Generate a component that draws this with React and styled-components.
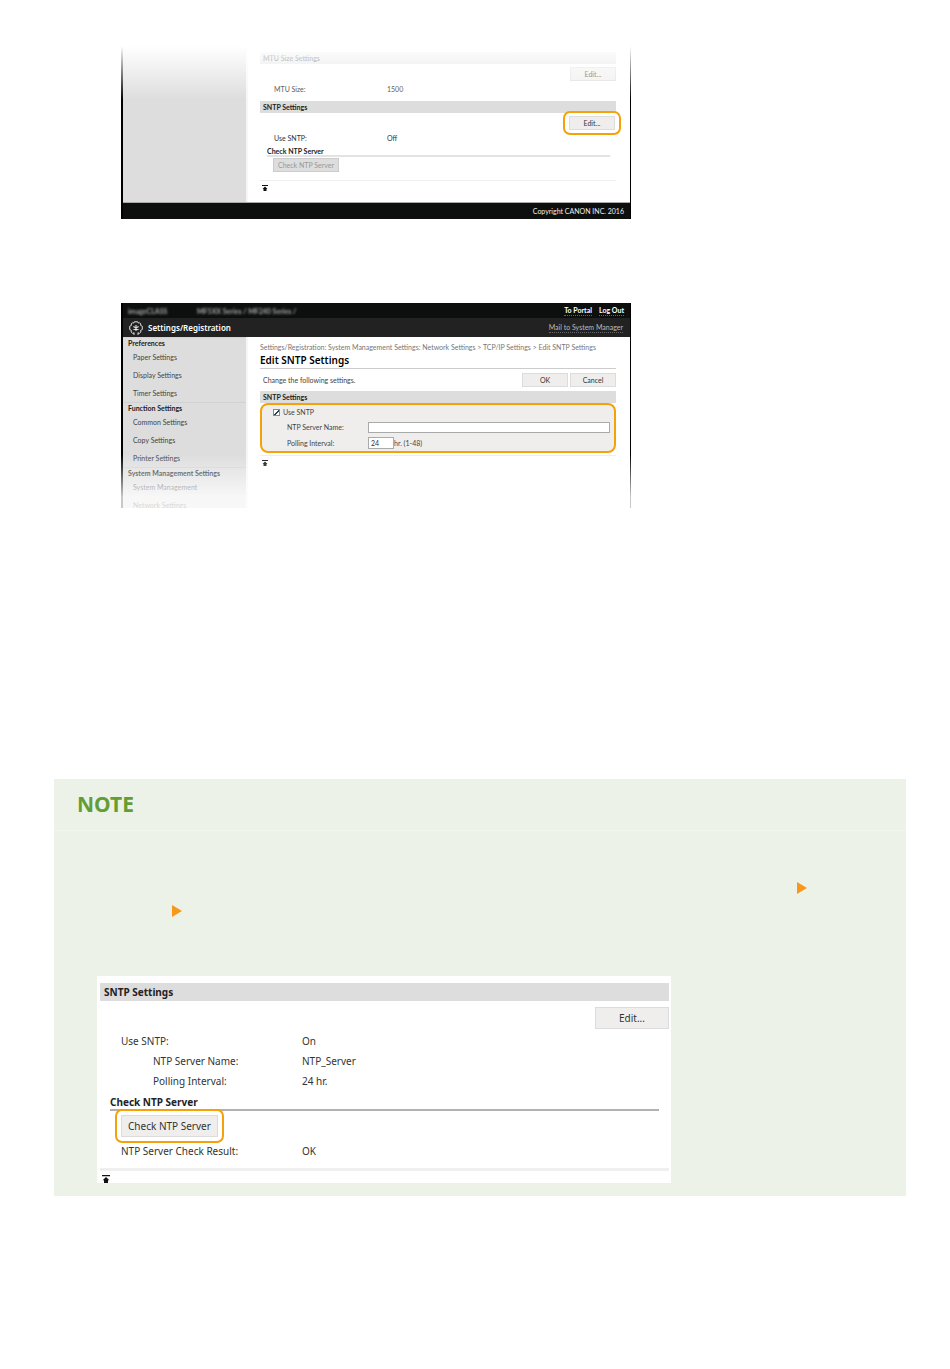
import React from "react";
import styled, { createGlobalStyle, css } from "styled-components";

const GlobalStyle = createGlobalStyle`
	* {
		box-sizing: border-box;
	}

	body {
		margin: 0;
		background: #fff;
		color: #444;
		font-family: "Noto Sans", "Open Sans", sans-serif;
	}

	button,
	input {
		font-family: inherit;
	}
`;

const Page = styled.main`
	display: flex;
	flex-direction: column;
	padding: 46px 44px 173px 54px;
`;

const Screen = styled.section`
	position: relative;
	width: 100%;
	max-width: 510px;
	max-height: 205px;
	margin: 0 0 ${({ $after }) => $after}px 67px;
	padding: 0 1px 0 2px;
	background: #000;
	font-family: Lato, "Noto Sans", sans-serif;
	font-size: 7px;
	line-height: 12px;
	overflow: hidden;
`;

const Fade = styled.div`
	position: absolute;
	left: 0;
	right: 0;
	height: 54px;
	pointer-events: none;
	${({ $edge }) =>
		$edge === "top"
			? css`
					top: 0;
					background: linear-gradient(to bottom, #fff, #ffffff00);
			  `
			: css`
					bottom: 0;
					background: linear-gradient(to top, #ffffffc8 20%, #ffffff00);
			  `}
`;

const Columns = styled.div`
	display: flex;
	background: #fff;
`;

const Side = styled.nav`
	flex: 0 0 125px;
	background: #ddd;
	border-right: 2px solid #f6f6f6;
`;

const SideTitle = styled.h2`
	margin: 0;
	padding-left: 5px;
	font-size: 7px;
	line-height: 10px;
	font-weight: 700;
	color: #222;
	border-top: 1px solid #d2d2d2;
`;

const SideLink = styled.a`
	display: block;
	padding-left: 10px;
	line-height: 18px;
	color: #444;
	text-decoration: none;
`;

const Main = styled.div`
	flex: 1;
	padding: ${({ $top }) => $top}px 14px 0 12px;
`;

const Band = styled.h3`
	margin: 0;
	padding-left: ${({ $large }) => ($large ? 4 : 3)}px;
	background: #ddd;
	color: #222;
	font-weight: 700;
	font-size: ${({ $large }) => ($large ? 10 : 7)}px;
	line-height: ${({ $large }) => ($large ? 18 : 12)}px;
`;

const Actions = styled.div`
	display: flex;
	justify-content: flex-end;
	gap: 2px;
	padding-top: ${({ $top }) => $top}px;
`;

const Button = styled.button`
	min-width: ${({ $large }) => ($large ? 74 : 46)}px;
	height: ${({ $large }) => ($large ? 22 : 14)}px;
	padding: 0 ${({ $large }) => ($large ? 6 : 4)}px;
	border: 1px solid #dcdcdc;
	background: #efeeed;
	color: #333;
	font-size: ${({ $large }) => ($large ? 10 : 7)}px;
	line-height: 12px;

	&:disabled {
		background: #ddd;
		border-color: #ccc;
		color: #999;
	}
`;

const Ring = styled.div`
	width: fit-content;
	margin: ${({ $margin }) => $margin};
	padding: ${({ $pad }) => $pad};
	border: 2px solid #f5a10a;
	border-radius: 7px;
	background: #fff;
	line-height: 0;
`;

const Rows = styled.dl`
	display: grid;
	grid-template-columns: ${({ $label }) => $label}px 1fr;
	margin: 0;
	padding: ${({ $pad }) => $pad};
	line-height: ${({ $line }) => $line}px;
	color: #333;
`;

const Term = styled.dt`
	padding-left: ${({ $indent }) => ($indent ? 32 : 0)}px;
`;

const Value = styled.dd`
	margin: 0;
`;

const SubTitle = styled.h4`
	margin: ${({ $margin }) => $margin};
	color: #222;
	font-weight: 700;
	font-size: ${({ $large }) => ($large ? 10 : 7)}px;
	line-height: ${({ $large }) => ($large ? 14 : 8)}px;
	border-bottom: 2px solid ${({ $large }) => ($large ? "#b1b1b1" : "#e3e3e3")};
`;

const CheckRow = styled.div`
	display: flex;
	padding: 1px 0 8px 13px;
`;

const End = styled.div`
	padding: 4px 2px 11px;
	border-top: ${({ $thick }) => ($thick ? 3 : 1)}px solid #efefef;
	line-height: 0;
`;

const TopLink = styled.a`
	display: inline-block;
	color: #111;
`;

const Footer = styled.footer`
	padding-right: 6px;
	background: #0d0f0e;
	border-top: 1px solid #aaa;
	color: #eee;
	line-height: 16px;
	text-align: right;
`;

const TopBar = styled.header`
	display: flex;
	align-items: center;
	height: 15px;
	padding: 0 6px 0 5px;
	background: #0d0f0e;
	color: #fff;
`;

const Blurred = styled.span`
	width: ${({ $width }) => $width}px;
	color: #aaa;
	font-weight: 700;
	filter: blur(1px);
	white-space: nowrap;
`;

const BarLink = styled.a`
	margin-left: ${({ $push }) => ($push ? "auto" : "7px")};
	color: ${({ $dim }) => ($dim ? "#bbb" : "#fff")};
	font-weight: ${({ $dim }) => ($dim ? 400 : 700)};
	text-decoration: none;
	border-bottom: 1px dotted #666;
	line-height: 9px;
`;

const TitleBar = styled.div`
	display: flex;
	align-items: center;
	gap: 5px;
	height: 19px;
	padding: 0 7px 0 6px;
	background: #222;
	color: #fff;
`;

const AppName = styled.strong`
	font-family: "Noto Sans", sans-serif;
	font-size: 8px;
	font-weight: 600;
`;

const Crumbs = styled.div`
	color: #777;
	white-space: nowrap;
`;

const PageTitle = styled.h1`
	margin: 0 0 4px;
	color: #000;
	font-family: "Noto Sans", sans-serif;
	font-size: 10px;
	line-height: 15px;
	font-weight: 600;
	border-bottom: 1px solid #ccc;
`;

const Intro = styled.div`
	display: flex;
	justify-content: space-between;
	align-items: center;
	margin-bottom: 4px;
	padding-left: 3px;
`;

const Form = styled.form`
	display: grid;
	grid-template-columns: 81px 1fr;
	row-gap: 2px;
	align-items: center;
	margin-bottom: 2px;
	padding: 1px 4px 1px 25px;
	border: 2px solid #f5a10a;
	border-radius: 8px;
	background: #efeeed;
`;

const CheckLabel = styled.label`
	display: flex;
	grid-column: 1 / -1;
	align-items: center;
	gap: 3px;
	margin-left: -14px;
	line-height: 12px;
`;

const CheckBox = styled.input`
	appearance: none;
	width: 7px;
	height: 7px;
	margin: 0;
	border: 1px solid #6b93ad;
	background: #fff;

	&:checked {
		background: linear-gradient(135deg, #fff 40%, #245 40% 65%, #fff 65%);
	}
`;

const Field = styled.div`
	display: flex;
	align-items: center;
	min-height: 14px;
`;

const TextInput = styled.input`
	width: ${({ $short }) => ($short ? "26px" : "100%")};
	height: ${({ $short }) => ($short ? 12 : 11)}px;
	padding: 0 2px;
	border: 1px solid #aaa;
	background: #fff;
	color: #333;
	font-size: 7px;
`;

const Note = styled.section`
	background: #ecf2e8;
	padding-bottom: 13px;
`;

const NoteTitle = styled.h2`
	margin: 0;
	padding-left: 23px;
	color: #659d35;
	font-size: 21px;
	line-height: 51px;
	font-weight: 700;
	border-bottom: 1px solid #f2f6ef;
`;

const NoteBody = styled.div`
	display: flex;
	flex-direction: column;
	gap: 11px;
	padding: 51px 99px 59px 118px;
`;

const RefLink = styled.a`
	align-self: ${({ $end }) => ($end ? "flex-end" : "flex-start")};
	display: flex;
`;

const Figure = styled.div`
	max-width: 574px;
	height: 207px;
	margin-left: 43px;
	padding: 7px 2px 0 3px;
	overflow: hidden;
	background: #fff;
	font-size: 10px;
`;

const Arrow = () => (
	<svg width="10" height="12" viewBox="0 0 10 12">
		<path d="M0 0L10 6L0 12Z" fill="#f7981d" />
	</svg>
);

const ToTop = ({ size = 6 }) => (
	<TopLink href="#top" aria-label="Back to top">
		<svg width={size} height={size} viewBox="0 0 6 6">
			<path d="M0 0H6V1H0ZM3 1.5L5.5 4H4.5V6H1.5V4H0.5Z" fill="currentColor" />
		</svg>
	</TopLink>
);

const GearIcon = () => (
	<svg width="14" height="14" viewBox="0 0 14 14" fill="none" stroke="#ddd">
		<path d="M5.3 0.8L4.8 2L3.5 1.7L2.2 3L2.5 4.3L0.7 5.3V8.5L2.3 9.3L2.1 11L3.6 12.3L5 12M8.7 0.8L9.2 2L10.5 1.7L11.8 3L11.5 4.3L13.3 5.3V8.5L11.7 9.3L11.9 11L10.4 12.3L9 12" />
		<path d="M5.3 0.8H8.7" />
		<path d="M7 4V10M4.4 5.5L9.6 8.5M9.6 5.5L4.4 8.5" strokeWidth="1.2" />
		<path d="M5 11.5V14M9 11.5V14" />
	</svg>
);

const menu = [
	{ title: "Preferences", items: ["Paper Settings", "Display Settings", "Timer Settings"] },
	{ title: "Function Settings", items: ["Common Settings", "Copy Settings", "Printer Settings"] },
	{ title: "System Management Settings", items: ["System Management", "Network Settings"] },
];

const TcpIpScreen = () => (
	<Screen $after={84}>
		<Columns>
			<Side />
			<Main $top={6}>
				<Band>MTU Size Settings</Band>
				<Actions $top={3}>
					<Button type="button">Edit...</Button>
				</Actions>
				<Rows $label={113} $pad="1px 0 5px 14px" $line={14}>
					<Term>MTU Size:</Term>
					<Value>1500</Value>
				</Rows>
				<Band>SNTP Settings</Band>
				<Actions $top={0}>
					<Ring $margin="-2px -5px -4px 0" $pad="3px 4px">
						<Button type="button">Edit...</Button>
					</Ring>
				</Actions>
				<Rows $label={113} $pad="0 0 0 14px" $line={14}>
					<Term>Use SNTP:</Term>
					<Value>Off</Value>
				</Rows>
				<SubTitle $margin="2px 6px 0 7px">Check NTP Server</SubTitle>
				<CheckRow>
					<Button type="button" disabled>
						Check NTP Server
					</Button>
				</CheckRow>
				<End>
					<ToTop />
				</End>
			</Main>
		</Columns>
		<Footer>Copyright CANON INC. 2016</Footer>
		<Fade $edge="top" />
	</Screen>
);

const EditScreen = () => (
	<Screen $after={271}>
		<TopBar>
			<Blurred $width={69}>imageCLASS</Blurred>
			<Blurred>MF5XX Series / MF240 Series /</Blurred>
			<BarLink href="#portal" $push>
				To Portal
			</BarLink>
			<BarLink href="#logout">Log Out</BarLink>
		</TopBar>
		<TitleBar>
			<GearIcon />
			<AppName>Settings/Registration</AppName>
			<BarLink href="#mail" $push $dim>
				Mail to System Manager
			</BarLink>
		</TitleBar>
		<Columns>
			<Side>
				{menu.map(({ title, items }) => (
					<React.Fragment key={title}>
						<SideTitle>{title}</SideTitle>
						{items.map((item) => (
							<SideLink key={item} href="#menu">
								{item}
							</SideLink>
						))}
					</React.Fragment>
				))}
			</Side>
			<Main $top={4}>
				<Crumbs>
					Settings/Registration: System Management Settings: Network Settings &gt; TCP/IP Settings &gt; Edit
					SNTP Settings
				</Crumbs>
				<PageTitle>Edit SNTP Settings</PageTitle>
				<Intro>
					Change the following settings.
					<Actions $top={0}>
						<Button type="button">OK</Button>
						<Button type="button">Cancel</Button>
					</Actions>
				</Intro>
				<Band>SNTP Settings</Band>
				<Form>
					<CheckLabel>
						<CheckBox type="checkbox" defaultChecked />
						Use SNTP
					</CheckLabel>
					<label htmlFor="server">NTP Server Name:</label>
					<Field>
						<TextInput id="server" type="text" />
					</Field>
					<label htmlFor="interval">Polling Interval:</label>
					<Field>
						<TextInput id="interval" type="text" defaultValue="24" $short />
						hr. (1-48)
					</Field>
				</Form>
				<End>
					<ToTop />
				</End>
			</Main>
		</Columns>
		<Fade $edge="bottom" />
	</Screen>
);

const NotePanel = () => (
	<Note>
		<NoteTitle>NOTE</NoteTitle>
		<NoteBody>
			<RefLink href="#ref" aria-label="Reference" $end>
				<Arrow />
			</RefLink>
			<RefLink href="#ref" aria-label="Reference">
				<Arrow />
			</RefLink>
		</NoteBody>
		<Figure>
			<Band $large>SNTP Settings</Band>
			<Actions $top={6}>
				<Button type="button" $large>
					Edit...
				</Button>
			</Actions>
			<Rows $label={181} $pad="2px 0 0 21px" $line={20}>
				<Term>Use SNTP:</Term>
				<Value>On</Value>
				<Term $indent>NTP Server Name:</Term>
				<Value>NTP_Server</Value>
				<Term $indent>Polling Interval:</Term>
				<Value>24 hr.</Value>
			</Rows>
			<SubTitle $large $margin="4px 10px 0">
				Check NTP Server
			</SubTitle>
			<Ring $margin="-2px 0 0 15px" $pad="4px">
				<Button type="button" $large>
					Check NTP Server
				</Button>
			</Ring>
			<Rows $label={181} $pad="0 0 9px 21px" $line={16}>
				<Term>NTP Server Check Result:</Term>
				<Value>OK</Value>
			</Rows>
			<End $thick>
				<ToTop size={8} />
			</End>
		</Figure>
	</Note>
);

const App = () => (
	<>
		<GlobalStyle />
		<Page>
			<TcpIpScreen />
			<EditScreen />
			<NotePanel />
		</Page>
	</>
);

export default App;
